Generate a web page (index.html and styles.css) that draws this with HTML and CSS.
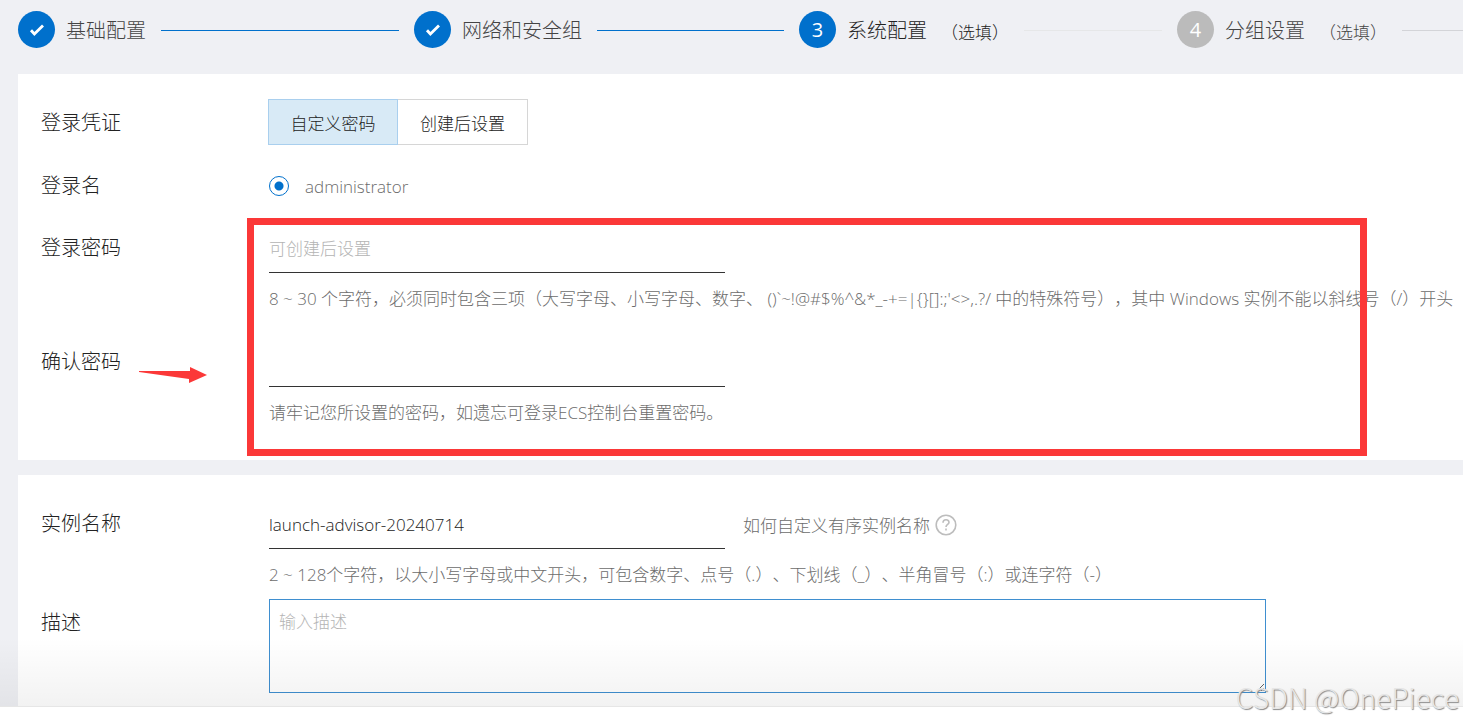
FILE: index.html
```html
<!DOCTYPE html>
<html lang="zh-CN">
<head>
<meta charset="utf-8">
<title>系统配置</title>
<link rel="stylesheet" href="styles.css">
</head>
<body>
<main class="page">
  <ol class="steps">
    <li class="step step-one">
      <span class="step-badge"><svg class="step-check" viewBox="0 0 16 14" aria-hidden="true"><path d="M2 7.2 5.4 11 14 2.4"/></svg></span>
      <span class="step-title">基础配置</span>
      <span class="step-line"></span>
    </li>
    <li class="step step-two">
      <span class="step-badge"><svg class="step-check" viewBox="0 0 16 14" aria-hidden="true"><path d="M2 7.2 5.4 11 14 2.4"/></svg></span>
      <span class="step-title">网络和安全组</span>
      <span class="step-line"></span>
    </li>
    <li class="step step-three is-current">
      <span class="step-badge">3</span>
      <span class="step-title">系统配置</span>
      <span class="step-note">（选填）</span>
      <span class="step-line line-faint"></span>
    </li>
    <li class="step step-four is-pending">
      <span class="step-badge">4</span>
      <span class="step-title">分组设置</span>
      <span class="step-note">（选填）</span>
      <span class="step-line line-gray"></span>
    </li>
  </ol>

  <section class="panel panel-login">
    <div class="row">
      <span class="label">登录凭证</span>
      <div class="segments">
        <button type="button" class="segment is-active">自定义密码</button>
        <button type="button" class="segment">创建后设置</button>
      </div>
    </div>
    <div class="row row-name">
      <span class="label">登录名</span>
      <label class="radio"><input type="radio" name="login-name" checked>administrator</label>
    </div>
    <div class="row">
      <label class="label" for="password">登录密码</label>
      <div class="field">
        <input class="text-input" id="password" type="password" placeholder="可创建后设置">
        <p class="hint">8 ~ 30 个字符，必须同时包含三项（大写字母、小写字母、数字、 ()`~!@#$%^&amp;*_-+=|{}[]:;'&lt;&gt;,.?/ 中的特殊符号），其中 Windows 实例不能以斜线号（/）开头</p>
      </div>
    </div>
    <div class="row row-confirm">
      <label class="label" for="confirm">确认密码</label>
      <div class="field">
        <input class="text-input" id="confirm" type="password">
        <p class="hint">请牢记您所设置的密码，如遗忘可登录ECS控制台重置密码。</p>
      </div>
    </div>
    <div class="callout"></div>
    <svg class="callout-arrow" viewBox="0 0 68 16" aria-hidden="true"><path d="M0 4H51V0L68 8 50 16V12L0 5Z"/></svg>
  </section>

  <section class="panel panel-instance">
    <div class="row">
      <label class="label" for="instance">实例名称</label>
      <div class="field">
        <div class="input-line">
          <input class="text-input" id="instance" type="text" value="launch-advisor-20240714">
          <a class="help" href="#">如何自定义有序实例名称
            <svg class="help-icon" viewBox="0 0 22 22" aria-hidden="true"><circle cx="11" cy="11" r="9.8"/><path d="M8 8.8C8 6.8 9.3 5.8 11 5.8S14 6.9 14 8.5C14 10.4 11 10.6 11 13"/><path d="M11 14.6V16.4"/></svg></a>
        </div>
        <p class="hint">2 ~ 128个字符，以大小写字母或中文开头，可包含数字、点号（.）、下划线（_）、半角冒号（:）或连字符（-）</p>
      </div>
    </div>
    <div class="row row-description">
      <label class="label" for="description">描述</label>
      <textarea class="description" id="description" placeholder="输入描述"></textarea>
    </div>
  </section>
  <div class="bottom-shade"></div>
</main>
<div class="watermark">CSDN @OnePiece</div>
</body>
</html>
```
FILE: styles.css
```css
* {
  box-sizing: border-box;
}

body {
  position: relative;
  display: flex;
  flex-direction: column;
  min-height: 100vh;
  margin: 0;
  padding-bottom: 18px;
  overflow: hidden;
  background: #fff;
  color: #222;
  font-family: "Open Sans", "Noto Sans CJK SC", sans-serif;
  font-size: 17px;
  font-weight: 300;
  text-spacing-trim: space-all;
}

button,
input,
textarea {
  font: inherit;
  color: inherit;
}

.page {
  position: relative;
  flex: 1;
  display: flex;
  flex-direction: column;
  padding-left: 18px;
  overflow: hidden;
  background: #eff0f4;
}

.steps {
  display: flex;
  margin: 0;
  padding: 11px 0 24px;
  list-style: none;
}

.step {
  display: flex;
  align-items: center;
  flex: 1 1 0;
  min-width: 0;
  color: #444;
  white-space: nowrap;
}

.step-one { flex-grow: 396; }
.step-two { flex-grow: 385; }
.step-three { flex-grow: 378; }
.step-four { flex-grow: 286; }

.is-current {
  color: #222;
}

.step-badge {
  display: flex;
  flex: none;
  align-items: center;
  align-self: flex-start;
  justify-content: center;
  width: 37px;
  height: 37px;
  margin-right: 11px;
  border-radius: 50%;
  background: #0070cc;
  color: #fff;
  font-size: 20px;
  font-weight: 400;
}

.is-pending .step-badge {
  background: #bbb;
}

.step-check {
  width: 16px;
  height: 14px;
  fill: none;
  stroke: #fff;
  stroke-width: 2.8;
}

.step-title {
  font-size: 20px;
  line-height: 39px;
}

.step-note {
  margin-left: 14px;
  padding-top: 2px;
}

.step-line {
  flex: 1;
  height: 1px;
  margin: 0 15px;
  background: #0070cc;
}

.line-faint {
  background: #e6e7e8;
}

.line-gray {
  margin-right: 0;
  background: #d3d4d8;
}

.panel {
  position: relative;
  padding: 25px 0 0 23px;
  background: #fff;
}

.panel-login {
  padding-bottom: 35px;
}

.panel-instance {
  flex: 1;
  margin-top: 15px;
}

.row {
  display: grid;
  grid-template-columns: 228px minmax(0, 1fr);
  align-items: start;
}

.row-name {
  align-items: center;
  padding: 15px 0 14px;
}

.row-confirm {
  margin-top: 27px;
}

.row-description {
  margin-top: 12px;
}

.label {
  font-size: 20px;
  line-height: 48px;
}

.segments {
  display: flex;
  margin-left: -1px;
}

.segment {
  width: 130px;
  height: 46px;
  padding: 0;
  border: 1px solid #d6d6d6;
  border-left: 0;
  background: #fff;
}

.segment.is-active {
  border: 1px solid #a9cfee;
  background: #d8eaf6;
}

.radio {
  display: flex;
  align-items: center;
  gap: 16px;
  color: #6c6c6c;
}

.radio input {
  appearance: none;
  width: 20px;
  height: 20px;
  margin: 0;
  border: 1px solid #0070cc;
  border-radius: 50%;
  background: radial-gradient(circle, #0070cc 4px, transparent 5px);
}

.text-input {
  display: block;
  width: 456px;
  height: 49px;
  padding: 0;
  border: 0;
  border-bottom: 1px solid #333;
  border-radius: 0;
  background: transparent;
  outline: 0;
}

.text-input::placeholder,
.description::placeholder {
  color: #b4b4b4;
  opacity: 1;
}

.hint {
  margin: 14px 0 0;
  color: #6c6c6c;
  line-height: 24px;
  white-space: nowrap;
}

.input-line {
  display: flex;
  align-items: center;
  gap: 18px;
}

.help {
  display: flex;
  align-items: center;
  gap: 5px;
  color: #6c6c6c;
  text-decoration: none;
}

.help-icon {
  width: 22px;
  height: 22px;
  fill: none;
  stroke: #bdbdbd;
  stroke-width: 1.6;
}

.description {
  width: calc(100% - 197px);
  height: 94px;
  padding: 10px 9px;
  border: 1px solid #3f8fd0;
  border-radius: 0;
  background: transparent;
  line-height: 24px;
  outline: 0;
}

.callout {
  position: absolute;
  top: 144px;
  right: 96px;
  bottom: 4px;
  left: 229px;
  border: 7px solid #fb3838;
  pointer-events: none;
}

.callout-arrow {
  position: absolute;
  top: 293px;
  left: 121px;
  width: 68px;
  height: 16px;
  fill: #fb3838;
}

.bottom-shade {
  position: absolute;
  right: 0;
  bottom: 0;
  left: 0;
  height: 70px;
  border-bottom: 1px solid #e6e6e6;
  background: linear-gradient(rgba(0, 0, 0, 0), rgba(0, 0, 0, 0.05));
  pointer-events: none;
}

.watermark {
  position: absolute;
  right: 4px;
  bottom: 10px;
  color: #e6e6e6;
  font-family: "Noto Sans CJK SC", sans-serif;
  font-size: 28px;
  line-height: 36px;
  text-shadow: 1px 1px 1px #888;
}
```
